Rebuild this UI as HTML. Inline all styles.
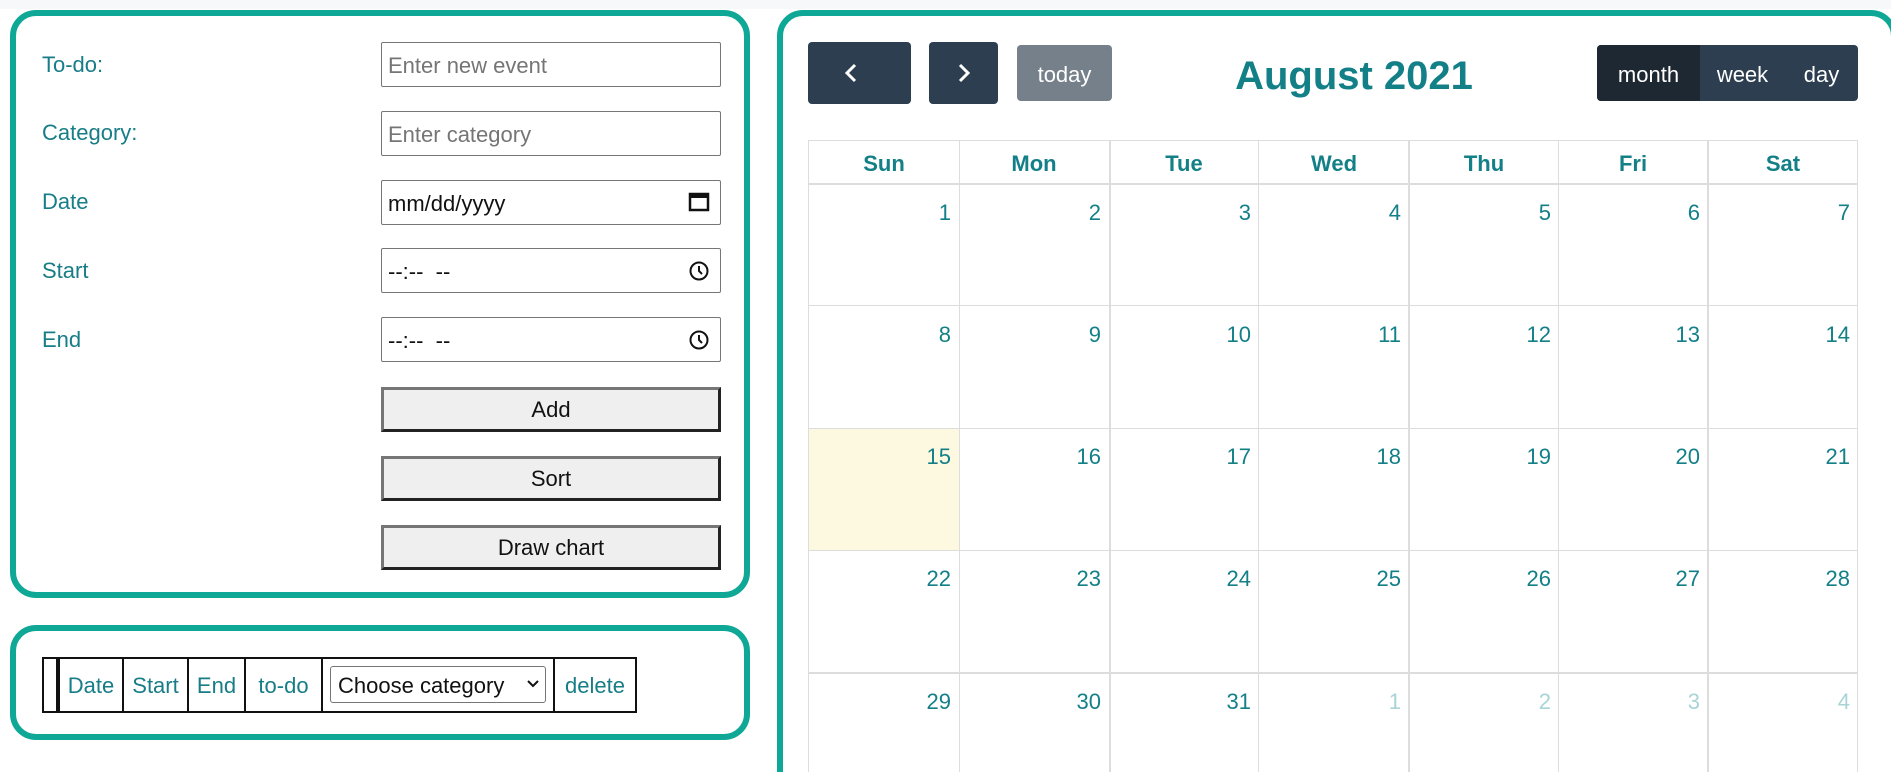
<!DOCTYPE html>
<html style="height:772px;overflow:hidden"><head><meta charset="utf-8"><style>
*{box-sizing:border-box;margin:0;padding:0}
body{width:1891px;height:772px;overflow:hidden;background:#fff;font-family:"Liberation Sans",sans-serif;position:relative;color:#137f87}
.a{position:absolute}
.box{position:absolute;border:6px solid #0fa896;border-radius:26px;background:#fff}
.lbl{position:absolute;left:42px;font-size:22px;color:#177d87}
.inp{position:absolute;left:381px;width:340px;height:45px;border:1px solid #767676;border-radius:2px;font-size:22px;padding:10px 6px;color:#757575;background:#fff}
.inp.d{color:#111}
.btn{position:absolute;left:381px;width:340px;height:45px;border:3px solid;border-color:#767676 #222 #222 #767676;background:#efefef;font-size:22px;color:#111;text-align:center;line-height:40px}
.tb{position:absolute;top:657px;height:56px;border:2px solid #111;border-left:none;font-size:22px;line-height:54px;text-align:center;color:#177d87}
.cb{position:absolute;border-radius:4px;color:#fff;font-size:22px;text-align:center}
.g{position:absolute;background:#ddd}
.n{position:absolute;width:150px;text-align:right;font-size:22px;color:#137f87}
.h{position:absolute;width:150px;text-align:center;font-size:22px;font-weight:bold;color:#137f87;top:151px}
</style></head><body>
<div class="a" style="left:0;top:0;width:1891px;height:9px;background:#f7f8fa"></div>
<div class="box" style="left:10px;top:10px;width:740px;height:588px"></div>
<div class="lbl" style="top:52px">To-do:</div>
<div class="lbl" style="top:120px">Category:</div>
<div class="lbl" style="top:189px">Date</div>
<div class="lbl" style="top:258px">Start</div>
<div class="lbl" style="top:327px">End</div>
<div class="inp" style="top:42px">Enter new event</div>
<div class="inp" style="top:111px">Enter category</div>
<div class="inp d" style="top:180px">mm/dd/yyyy<svg class="a" style="right:10px;top:10px" width="22" height="22" viewBox="0 0 22 22"><rect x="2" y="3" width="18" height="16" fill="none" stroke="#111" stroke-width="2.5"/><rect x="2" y="3" width="18" height="4" fill="#111"/></svg></div>
<div class="inp d" style="top:248px">--:-- &nbsp;--<svg class="a" style="right:10px;top:11px" width="22" height="22" viewBox="0 0 22 22"><circle cx="11" cy="11" r="8.5" fill="none" stroke="#111" stroke-width="2"/><path d="M11 6v5l3 3" fill="none" stroke="#111" stroke-width="2"/></svg></div>
<div class="inp d" style="top:317px">--:-- &nbsp;--<svg class="a" style="right:10px;top:11px" width="22" height="22" viewBox="0 0 22 22"><circle cx="11" cy="11" r="8.5" fill="none" stroke="#111" stroke-width="2"/><path d="M11 6v5l3 3" fill="none" stroke="#111" stroke-width="2"/></svg></div>
<div class="btn" style="top:387px">Add</div>
<div class="btn" style="top:456px">Sort</div>
<div class="btn" style="top:525px">Draw chart</div>

<div class="box" style="left:10px;top:625px;width:740px;height:115px"></div>
<div class="tb" style="left:42px;width:16px;border-left:2px solid #111"></div>
<div class="tb" style="left:58px;width:66px;border-left:2px solid #111">Date</div>
<div class="tb" style="left:124px;width:65px">Start</div>
<div class="tb" style="left:189px;width:57px">End</div>
<div class="tb" style="left:246px;width:77px">to-do</div>
<div class="tb" style="left:323px;width:232px"></div>
<div class="tb" style="left:555px;width:82px">delete</div>
<div class="a" style="left:330px;top:666px;width:216px;height:37px;border:1px solid #767676;border-radius:3px;font-size:22px;color:#111;padding:6px 7px">Choose category<svg class="a" style="right:6px;top:13px" width="12" height="8" viewBox="0 0 12 8"><path d="M1 1l5 5 5-5" fill="none" stroke="#111" stroke-width="2"/></svg></div>

<div class="box" style="left:777px;top:10px;width:1120px;height:790px"></div>
<div class="cb" style="left:808px;top:42px;width:103px;height:62px;background:#2c3e50"><svg class="a" style="left:36px;top:21px" width="14" height="20" viewBox="0 0 14 20"><path d="M11 2L3 10l8 8" fill="none" stroke="#fff" stroke-width="3"/></svg></div>
<div class="cb" style="left:929px;top:42px;width:69px;height:62px;background:#2c3e50"><svg class="a" style="left:28px;top:21px" width="14" height="20" viewBox="0 0 14 20"><path d="M3 2l8 8-8 8" fill="none" stroke="#fff" stroke-width="3"/></svg></div>
<div class="cb" style="left:1017px;top:45px;width:95px;height:56px;background:#76808b;line-height:60px">today</div>
<div class="a" style="left:1154px;top:54px;width:400px;text-align:center;font-size:40px;font-weight:bold;color:#137f87">August 2021</div>
<div class="cb" style="left:1597px;top:45px;width:261px;height:56px;background:#2c3e50"></div>
<div class="cb" style="left:1597px;top:45px;width:103px;height:56px;background:#1e2833;line-height:60px;border-radius:4px 0 0 4px">month</div>
<div class="cb" style="left:1700px;top:45px;width:85px;height:56px;line-height:60px">week</div>
<div class="cb" style="left:1785px;top:45px;width:73px;height:56px;line-height:60px">day</div>

<div class="g" style="left:808px;top:140px;width:1050px;height:1px"></div>
<div class="g" style="left:808px;top:183px;width:1050px;height:2px"></div>
<div class="g" style="left:808px;top:305px;width:1050px;height:1px"></div>
<div class="g" style="left:808px;top:428px;width:1050px;height:1px"></div>
<div class="g" style="left:808px;top:550px;width:1050px;height:1px"></div>
<div class="g" style="left:808px;top:672px;width:1050px;height:2px"></div>
<div class="a" style="left:809px;top:429px;width:150px;height:121px;background:#fdf8e0"></div>
<div class="g" style="left:808px;top:140px;width:1px;height:640px"></div>
<div class="g" style="left:959px;top:140px;width:1px;height:640px"></div>
<div class="g" style="left:1109px;top:140px;width:2px;height:640px"></div>
<div class="g" style="left:1258px;top:140px;width:1px;height:640px"></div>
<div class="g" style="left:1408px;top:140px;width:2px;height:640px"></div>
<div class="g" style="left:1558px;top:140px;width:1px;height:640px"></div>
<div class="g" style="left:1707px;top:140px;width:2px;height:640px"></div>
<div class="g" style="left:1857px;top:140px;width:1px;height:640px"></div>
<div class="h" style="left:809px">Sun</div><div class="h" style="left:959px">Mon</div><div class="h" style="left:1109px">Tue</div><div class="h" style="left:1259px">Wed</div><div class="h" style="left:1409px">Thu</div><div class="h" style="left:1558px">Fri</div><div class="h" style="left:1708px">Sat</div>
<div class="n" style="left:801px;top:200px">1</div><div class="n" style="left:951px;top:200px">2</div><div class="n" style="left:1101px;top:200px">3</div><div class="n" style="left:1251px;top:200px">4</div><div class="n" style="left:1401px;top:200px">5</div><div class="n" style="left:1550px;top:200px">6</div><div class="n" style="left:1700px;top:200px">7</div>
<div class="n" style="left:801px;top:322px">8</div><div class="n" style="left:951px;top:322px">9</div><div class="n" style="left:1101px;top:322px">10</div><div class="n" style="left:1251px;top:322px">11</div><div class="n" style="left:1401px;top:322px">12</div><div class="n" style="left:1550px;top:322px">13</div><div class="n" style="left:1700px;top:322px">14</div>
<div class="n" style="left:801px;top:444px">15</div><div class="n" style="left:951px;top:444px">16</div><div class="n" style="left:1101px;top:444px">17</div><div class="n" style="left:1251px;top:444px">18</div><div class="n" style="left:1401px;top:444px">19</div><div class="n" style="left:1550px;top:444px">20</div><div class="n" style="left:1700px;top:444px">21</div>
<div class="n" style="left:801px;top:566px">22</div><div class="n" style="left:951px;top:566px">23</div><div class="n" style="left:1101px;top:566px">24</div><div class="n" style="left:1251px;top:566px">25</div><div class="n" style="left:1401px;top:566px">26</div><div class="n" style="left:1550px;top:566px">27</div><div class="n" style="left:1700px;top:566px">28</div>
<div class="n" style="left:801px;top:689px">29</div><div class="n" style="left:951px;top:689px">30</div><div class="n" style="left:1101px;top:689px">31</div><div class="n" style="left:1251px;top:689px;color:#a8d4d7">1</div><div class="n" style="left:1401px;top:689px;color:#a8d4d7">2</div><div class="n" style="left:1550px;top:689px;color:#a8d4d7">3</div><div class="n" style="left:1700px;top:689px;color:#a8d4d7">4</div>
</body></html>
